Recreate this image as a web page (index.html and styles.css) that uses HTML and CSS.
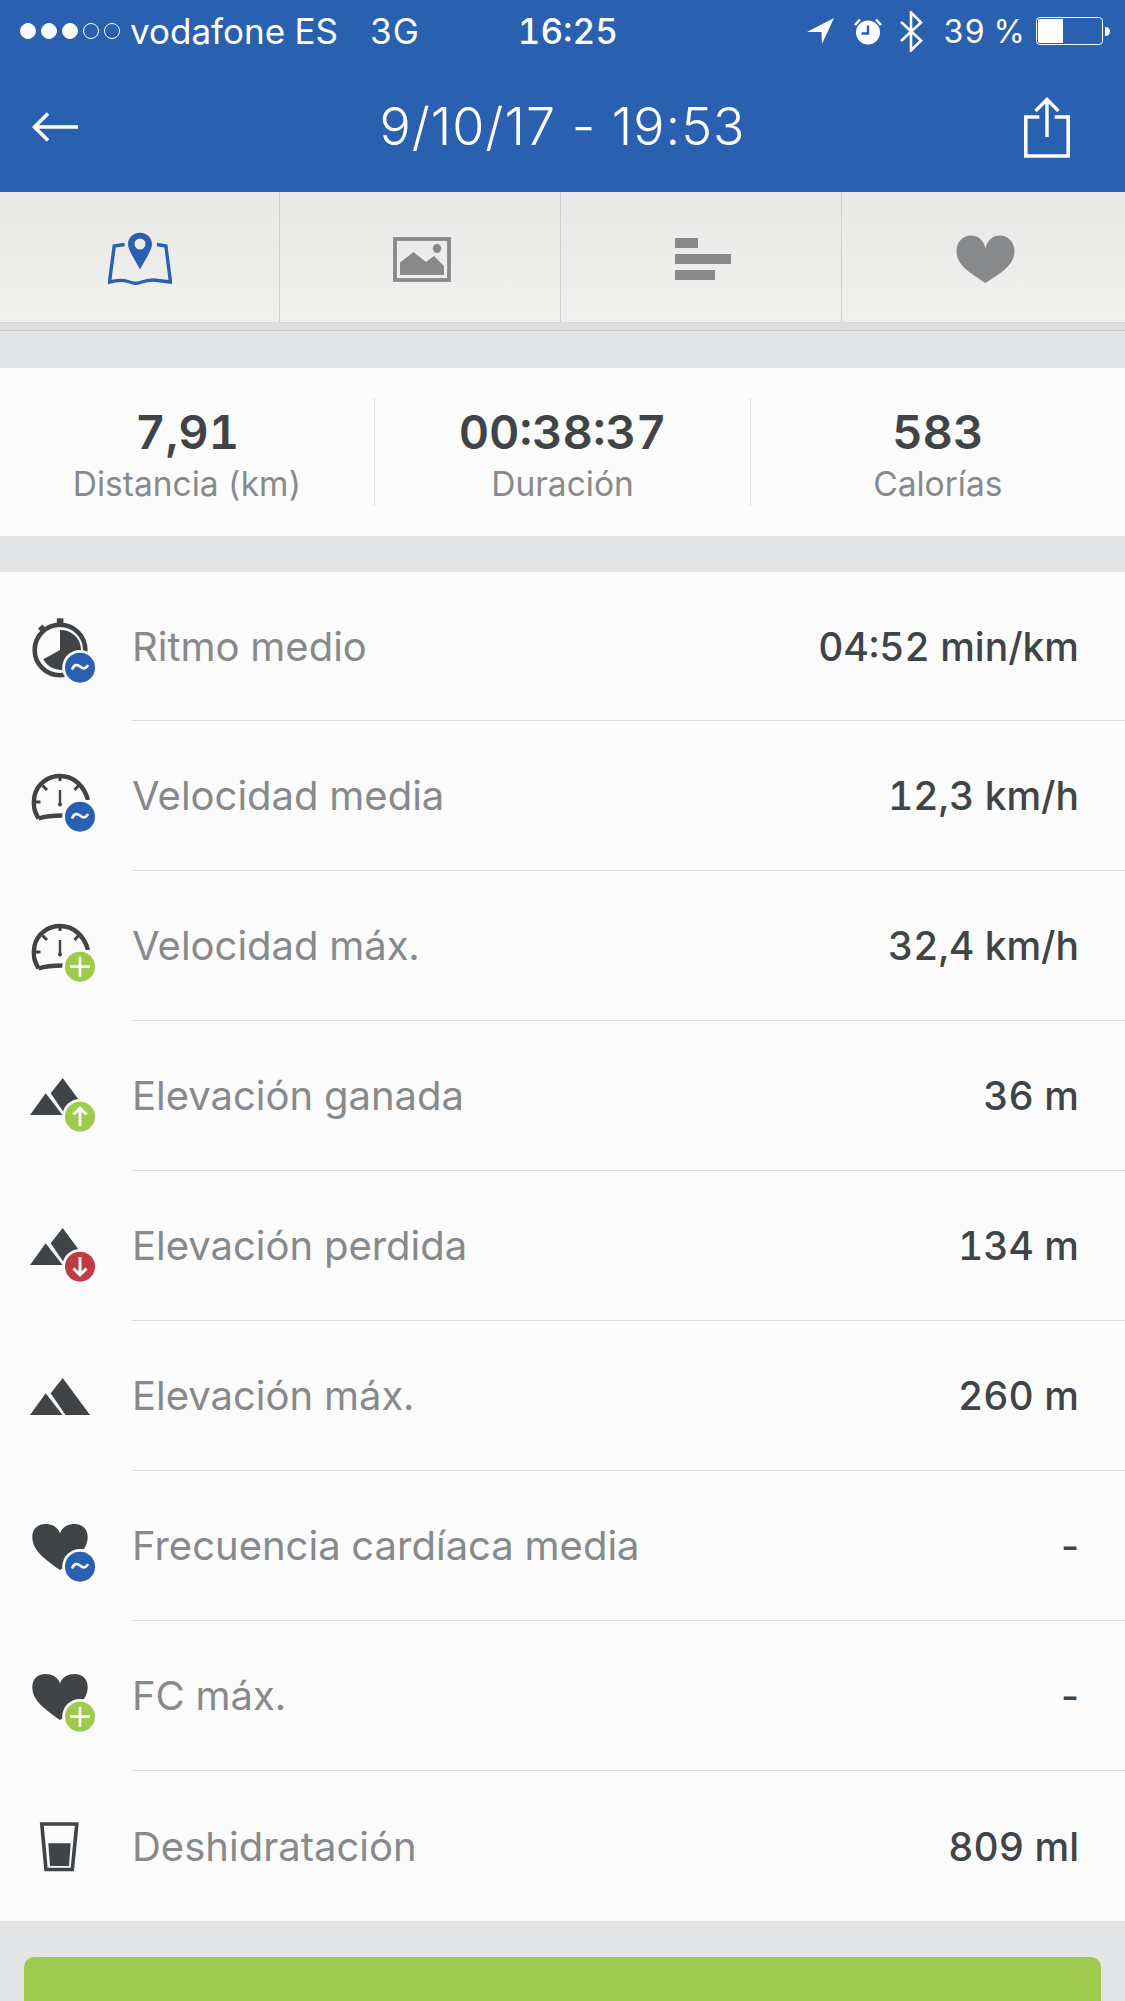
FILE: index.html
```html
<!DOCTYPE html>
<html lang="es">
<head>
<meta charset="utf-8">
<title>9/10/17 - 19:53</title>
<link rel="stylesheet" href="styles.css">
</head>
<body>
<svg class="defs" width="0" height="0" aria-hidden="true">
  <defs>
    <g id="stopwatch">
      <circle cx="34" cy="41" r="25.3" fill="none" stroke="#404447" stroke-width="4.6"/>
      <rect x="30.8" y="9.3" width="6.6" height="6" fill="#404447"/>
      <path d="M12 19.5l4.5-4 3.500 4-4.500 4z" fill="#404447"/>
      <path d="M34 21A20 20 0 1 1 17.300 50.300L34 41z" fill="#404447"/>
    </g>
    <g id="dial" fill="none" stroke="#404447">
      <path d="M12.500 60.500C8.500 53 6.500 48 8.500 38C11 26 22 18 34 18C48 18 58 28 62 42" stroke-width="4.400"/>
      <path d="M12.500 60.500C20 58 28 57.500 37 57.500" stroke-width="4.400"/>
      <path d="M34 18V23M8 44H14.500M16.500 27.500L21 32M52.500 27.500L48.500 32" stroke-width="3"/>
      <path d="M34 32V46" stroke-width="2.400"/>
      <circle cx="34" cy="46.500" r="2" fill="#404447" stroke="none"/>
    </g>
    <g id="mountain-small" fill="#404447">
      <path d="M4 57L19.700 35.300L36.500 57z"/>
      <path d="M24.700 35.300L36.700 20L64 57H39.500z"/>
    </g>
    <path id="heart-dark" fill="#404447" d="M34 62C20 52 6.300 43 6.300 29C6.300 21 12 16 19 16C26 16 32 19 34 25.500C36 19 42 16 49 16C56 16 61.700 21 61.700 29C61.700 43 48 52 34 62z"/>
    <g id="badge-avg">
      <circle cx="54" cy="58.700" r="17.800" fill="#fafbfa"/>
      <circle cx="54" cy="58.700" r="15" fill="#2a60b0"/>
      <path d="M46 60.500C48.500 55 51.500 55.500 54 57.500C56.500 59.500 59.500 61 62 56" fill="none" stroke="#f4f6fa" stroke-width="2.700"/>
    </g>
    <g id="badge-plus">
      <circle cx="54" cy="58.700" r="17.800" fill="#fafbfa"/>
      <circle cx="54" cy="58.700" r="15" fill="#9ecb4c"/>
      <path d="M44 58.700H64M54 48.700V68.700" fill="none" stroke="#fafbfa" stroke-width="2.700"/>
    </g>
    <g id="badge-up">
      <circle cx="54" cy="58.700" r="17.800" fill="#fafbfa"/>
      <circle cx="54" cy="58.700" r="15" fill="#9ecb4c"/>
      <path d="M54 68V50M47.500 56.500L54 50L60.500 56.500" fill="none" stroke="#fafbfa" stroke-width="3"/>
    </g>
    <g id="badge-down">
      <circle cx="54" cy="58.700" r="17.800" fill="#fafbfa"/>
      <circle cx="54" cy="58.700" r="15" fill="#c43a44"/>
      <path d="M54 49V67M47.500 60.500L54 67L60.500 60.500" fill="none" stroke="#fafbfa" stroke-width="3"/>
    </g>
  </defs>
</svg>

<header class="top">
  <div class="status">
    <div class="signal">
      <span class="dot"></span><span class="dot"></span><span class="dot"></span><span class="dot off"></span><span class="dot off"></span>
    </div>
    <span class="carrier">vodafone ES</span>
    <span class="net">3G</span>
    <span class="clock">16:25</span>
    <div class="status-right">
      <svg class="st-loc" width="28" height="26" viewBox="0 0 28 26"><path d="M0 14L27 0L15 26L14.500 14z" fill="#fff"/></svg>
      <svg class="st-alarm" width="28" height="28" viewBox="0 0 28 28"><path d="M1 8L6 2.500M27 8L22 2.500" stroke="#fff" stroke-width="2.600" fill="none"/><circle cx="14" cy="15.500" r="12" fill="#fff"/><path d="M14 8.500V16.500H7.500" stroke="#2a60b0" stroke-width="2.400" fill="none"/></svg>
      <svg class="st-bt" width="23" height="41" viewBox="0 0 23 41"><path d="M1 11L21 29.500L11 39.500V1.500L21 11.500L1 30" stroke="#fff" stroke-width="2.600" fill="none"/></svg>
      <span class="pct">39 %</span>
      <div class="battery"><span class="battery-level"></span></div>
      <span class="battery-nub"></span>
    </div>
  </div>
  <nav class="nav">
    <svg class="nav-back" width="46" height="30" viewBox="0 0 46 30"><path d="M46 15H3M16 1.500L2.500 15L16 28.500" fill="none" stroke="#fff" stroke-width="3.600"/></svg>
    <h1 class="title">9/10/17 - 19:53</h1>
    <svg class="nav-share" width="46" height="61" viewBox="0 0 46 61"><path d="M15.300 20H1.800V59H44.200V20H30.700" fill="none" stroke="#fff" stroke-width="3.600"/><path d="M23 40V3M11.500 14L23 2.500L34.500 14" fill="none" stroke="#fff" stroke-width="3.400"/></svg>
  </nav>
</header>

<div class="tabs">
  <div class="tab">
    <svg width="64" height="54" viewBox="0 0 64 54"><path d="M16.600 12.500L6.200 14L1.500 50C9 48 14 47.500 20 49.500C26 51.500 28 52 32 50.500C38 48.500 44 47 50 48.500L62.500 50L57.900 14L48.900 12.500" fill="none" stroke="#2a60b0" stroke-width="3.400"/><path fill-rule="evenodd" d="M32 0.700C24.500 0.700 20 6.500 20 12C20 18 27 28 32 37.500C37 28 44 18 44 12C44 6.500 39.500 0.700 32 0.700zM32 6.500A5.500 5.500 0 1 1 32 17.500A5.500 5.500 0 1 1 32 6.500z" fill="#2a60b0"/></svg>
  </div>
  <div class="tab">
    <svg width="58" height="45" viewBox="0 0 58 45"><rect x="2" y="2" width="54" height="41" fill="none" stroke="#88898b" stroke-width="3.800"/><path d="M7 38V25.500L20.500 15L33 25L41 19L51 29V38z" fill="#88898b"/><ellipse cx="44" cy="11.500" rx="4.200" ry="4.500" fill="#88898b"/></svg>
  </div>
  <div class="tab">
    <div class="bars"><span class="bar bar-s"></span><span class="bar bar-l"></span><span class="bar bar-m"></span></div>
  </div>
  <div class="tab">
    <svg width="59" height="48" viewBox="0 0 59 48"><path d="M29.500 48C16 39 0.500 31 0.500 16C0.500 7 7 0.500 15 0.500C22 0.500 27.500 5 29.500 13C31.500 5 37 0.500 44 0.500C52 0.500 58.500 7 58.500 16C58.500 31 43 39 29.500 48z" fill="#88898b"/></svg>
  </div>
</div>
<div class="tabs-edge"></div>

<section class="stats">
  <div class="stat"><span class="stat-num">7,91</span><span class="stat-label">Distancia (km)</span></div>
  <div class="stat"><span class="stat-num">00:38:37</span><span class="stat-label">Duración</span></div>
  <div class="stat"><span class="stat-num">583</span><span class="stat-label">Calorías</span></div>
</section>

<section class="list">
  <div class="row"><svg class="ico" width="76" height="76" viewBox="0 0 76 76"><use href="#stopwatch"/><use href="#badge-avg"/></svg><div class="row-body"><span class="row-label">Ritmo medio</span><span class="row-value">04:52 min/km</span></div></div>
  <div class="row"><svg class="ico" width="76" height="76" viewBox="0 0 76 76"><use href="#dial"/><use href="#badge-avg"/></svg><div class="row-body"><span class="row-label">Velocidad media</span><span class="row-value">12,3 km/h</span></div></div>
  <div class="row"><svg class="ico" width="76" height="76" viewBox="0 0 76 76"><use href="#dial"/><use href="#badge-plus"/></svg><div class="row-body"><span class="row-label">Velocidad máx.</span><span class="row-value">32,4 km/h</span></div></div>
  <div class="row"><svg class="ico" width="76" height="76" viewBox="0 0 76 76"><use href="#mountain-small"/><use href="#badge-up"/></svg><div class="row-body"><span class="row-label">Elevación ganada</span><span class="row-value">36 m</span></div></div>
  <div class="row"><svg class="ico" width="76" height="76" viewBox="0 0 76 76"><use href="#mountain-small"/><use href="#badge-down"/></svg><div class="row-body"><span class="row-label">Elevación perdida</span><span class="row-value">134 m</span></div></div>
  <div class="row"><svg class="ico" width="76" height="76" viewBox="0 0 76 76"><use href="#mountain-small"/></svg><div class="row-body"><span class="row-label">Elevación máx.</span><span class="row-value">260 m</span></div></div>
  <div class="row"><svg class="ico" width="76" height="76" viewBox="0 0 76 76"><use href="#heart-dark"/><use href="#badge-avg"/></svg><div class="row-body"><span class="row-label">Frecuencia cardíaca media</span><span class="row-value row-empty">-</span></div></div>
  <div class="row"><svg class="ico" width="76" height="76" viewBox="0 0 76 76"><use href="#heart-dark"/><use href="#badge-plus"/></svg><div class="row-body"><span class="row-label">FC máx.</span><span class="row-value row-empty">-</span></div></div>
  <div class="row"><svg class="ico" width="76" height="76" viewBox="0 0 76 76"><path d="M15.800 16L20 61.500H46.300L50.800 16z" fill="none" stroke="#404447" stroke-width="3.600"/><path d="M22.300 35.300H44.700L43 58H24z" fill="#404447"/></svg><div class="row-body"><span class="row-label">Deshidratación</span><span class="row-value">809 ml</span></div></div>
</section>

<div class="action"><div class="action-btn"></div></div>
</body>
</html>
```
FILE: styles.css
```css
* { box-sizing: border-box; }
html, body { margin: 0; padding: 0; }
body {
  width: 1125px;
  height: 2001px;
  overflow: hidden;
  background: #e3e4e6;
  font-family: Inter, "Liberation Sans", sans-serif;
  font-variant-numeric: tabular-nums;
}
.defs { position: absolute; }

.top { background: #2a60b0; color: #fff; height: 192px; display: flex; flex-direction: column; }
.status { height: 62px; display: flex; align-items: center; padding-left: 20px; font-size: 35px; }
.signal { display: flex; gap: 5px; width: 110px; }
.dot { width: 16px; height: 16px; border-radius: 50%; background: #fff; border: 1px solid #fff; }
.dot.off { background: transparent; }
.carrier { font-weight: 400; }
.net { margin-left: 32px; }
.clock { margin-left: 99px; font-weight: 500; }
.status-right { margin-left: auto; display: flex; align-items: center; padding-right: 15px; }
.st-loc { margin-right: 19px; }
.st-alarm { margin-right: 18px; }
.st-bt { margin-right: 20px; }
.pct { margin-right: 11px; font-size: 32px; }
.battery { width: 67px; height: 28px; border: 1px solid #fff; border-radius: 4px; padding: 1px; }
.battery-level { display: block; width: 25px; height: 100%; background: #fff; border-radius: 2px 0 0 2px; }
.battery-nub { width: 5px; height: 9px; margin-left: 2px; background: #fff; border-radius: 0 5px 5px 0; }

.nav { flex: 1; display: flex; align-items: center; justify-content: space-between; padding: 0 55px 0 32px; }
.nav-back { margin-right: 23px; }
.title { margin: 0; font-size: 52px; font-weight: 300; line-height: 1; font-variant-numeric: normal; letter-spacing: 1px; }

.tabs { height: 131px; display: grid; grid-template-columns: 279px 281px 281px 1fr; background: linear-gradient(#e8e8e6, #f0f0ee); border-bottom: 1px solid #d6d6d4; }
.tab { display: flex; align-items: center; justify-content: center; border-left: 1px solid #cfcfcf; padding: 4px 0 0 3px; }
.tab:first-child { border-left: 0; padding-left: 0; }
.bars { display: flex; flex-direction: column; gap: 6px; width: 56px; }
.bar { height: 10px; background: #88898b; }
.bar-s { width: 23px; }
.bar-l { width: 56px; }
.bar-m { width: 40px; }
.tabs-edge { height: 8px; background: #dededb; border-bottom: 1px solid #c8c8c6; }

.stats { margin-top: 37px; height: 168px; display: flex; align-items: center; background: #fafbfa; }
.stat { flex: 1; height: 108px; padding-top: 4px; display: flex; flex-direction: column; align-items: center; justify-content: center; border-right: 1px solid #dcdddd; }
.stat:last-child { border-right: 0; }
.stat-num { font-size: 47px; font-weight: 600; line-height: 56px; color: #404447; }
.stat-label { font-size: 33.500px; line-height: 40px; margin-top: 4px; color: #88898b; }

.list { margin-top: 36px; background: #fafbfa; }
.row { display: flex; align-items: stretch; height: 150px; }
.row:first-child { height: 149px; }
.row:last-child { height: 150px; }
.ico { flex: none; width: 76px; margin: auto 30px auto 26px; }
.row-body { flex: 1; display: flex; align-items: center; justify-content: space-between; padding-right: 46px; border-bottom: 1px solid #dcdddd; }
.row:last-child .row-body { border-bottom: 0; }
.row-label { font-size: 40px; color: #88898b; }
.row-value { font-size: 39px; font-weight: 500; color: #404447; }
.row-empty { font-variant-numeric: normal; }

.action { padding: 36px 24px 0; }
.action-btn { height: 120px; background: #9ecb4c; border-radius: 10px; }
```
